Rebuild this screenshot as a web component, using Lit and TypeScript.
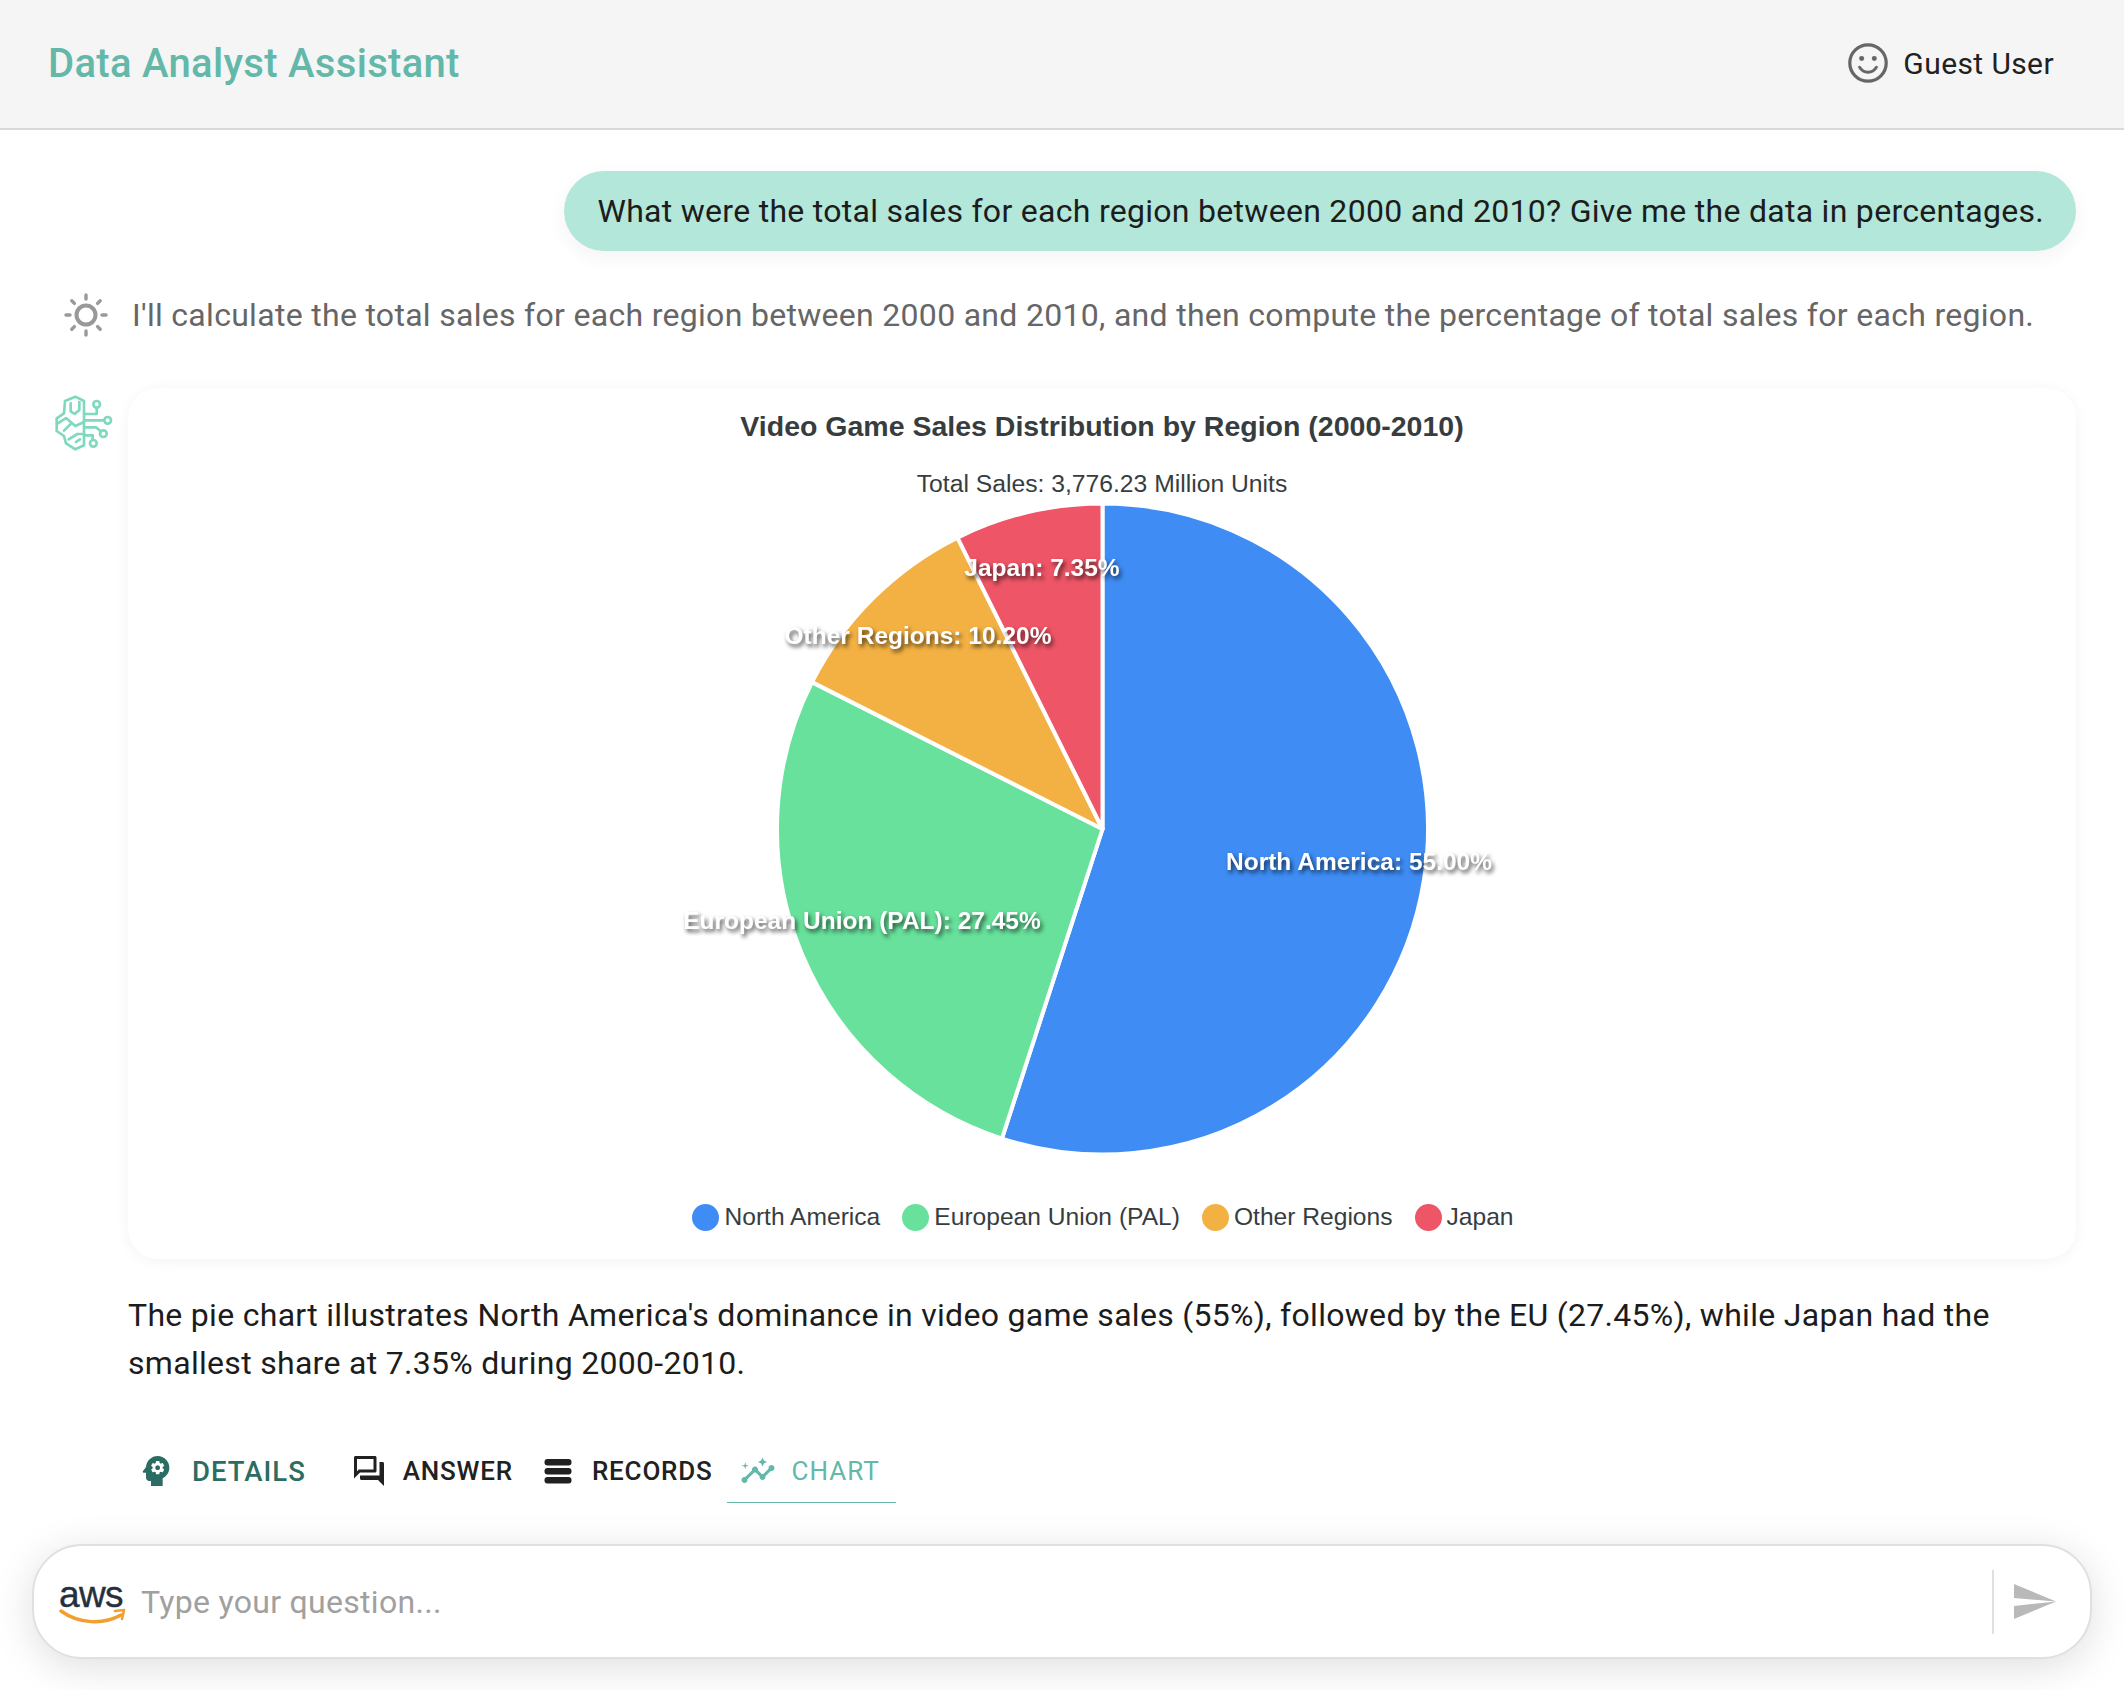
import { LitElement, html, css, svg } from "lit";
import { customElement } from "lit/decorators.js";

const CX = 1102.5, CY = 829, R = 325.5;
const slices = [
  { name: "North America", pct: 55.0, color: "#3e8cf4", lx: 1359, ly: 870 },
  { name: "European Union (PAL)", pct: 27.45, color: "#67e19b", lx: 862, ly: 929 },
  { name: "Other Regions", pct: 10.2, color: "#f3b143", lx: 918, ly: 644 },
  { name: "Japan", pct: 7.35, color: "#ee5567", lx: 1042, ly: 576 },
];

function arc(start: number, end: number) {
  const a0 = (start / 100) * 2 * Math.PI, a1 = (end / 100) * 2 * Math.PI;
  const x0 = CX + R * Math.sin(a0), y0 = CY - R * Math.cos(a0);
  const x1 = CX + R * Math.sin(a1), y1 = CY - R * Math.cos(a1);
  return `M${CX} ${CY}L${x0} ${y0}A${R} ${R} 0 ${end - start > 50 ? 1 : 0} 1 ${x1} ${y1}Z`;
}

@customElement("app-root")
export class AppRoot extends LitElement {
  static styles = css`
    :host { display: block; width: 2124px; height: 1690px; overflow: hidden; background: #fff; font-family: Roboto, sans-serif; color: #1f1f1f; }
    .page { display: flex; flex-direction: column; height: 1690px; }
    .top { display: flex; align-items: center; justify-content: space-between; flex: none; box-sizing: border-box; padding: 0 70px 2px 48px; background: #f5f5f5; border-bottom: 2px solid #d9d9d9; height: 130px; }
    .title { font-size: 40px; font-weight: 500; color: #63b8aa; letter-spacing: 0.3px; }
    .user { display: flex; align-items: center; gap: 12px; font-size: 30px; letter-spacing: 0.4px; color: #212121; }
    .user svg { width: 46px; height: 46px; }
    .main { flex: 1; display: flex; flex-direction: column; padding: 41px 48px 0 0; min-height: 0; }
    .bubble { align-self: flex-end; background: #b2e7da; border-radius: 40px; height: 80px; display: flex; align-items: center; padding: 0 32px 0 33px; font-size: 32px; letter-spacing: 0.29px; box-shadow: 0 6px 20px rgba(0,0,0,.05); color: #1c1c1c; white-space: nowrap; }
    .think { display: flex; align-items: center; margin-top: 42px; height: 44px; font-size: 32px; letter-spacing: 0.3px; color: #666; font-weight: 400; white-space: nowrap; }
    .think svg { width: 46px; height: 46px; margin-left: 63px; margin-right: 23px; flex: none; }
    .answer { display: flex; margin-top: 51px; }
    .brain { width: 84px; height: 75px; margin: -2px 0 0 40px; flex: none; }
    .body { margin-left: 4px; flex: 1; min-width: 0; }
    .card { position: relative; height: 871px; border-radius: 30px; background: #fff; box-shadow: 0 2px 14px rgba(0,0,0,.05); }
    .card svg { position: absolute; left: -128px; top: -388px; width: 2124px; height: 1690px; pointer-events: none; }
    .ctitle { font-family: "Liberation Sans", Arial, sans-serif; font-weight: 700; font-size: 28.5px; fill: #373d3f; text-anchor: middle; }
    .csub { font-family: "Liberation Sans", Arial, sans-serif; font-size: 24.7px; fill: #373d3f; text-anchor: middle; }
    .lbl { font-family: "Liberation Sans", Arial, sans-serif; font-weight: 700; font-size: 24.5px; fill: #fff; text-anchor: middle; filter: drop-shadow(2px 3px 2px rgba(0,0,0,.65)); }
    .legend { position: absolute; left: 0; right: 0; top: 815px; display: flex; justify-content: center; gap: 22px; font-family: "Liberation Sans", Arial, sans-serif; font-size: 24.6px; color: #373d3f; box-sizing: border-box; padding-left: 2px; }
    .leg { display: flex; align-items: center; gap: 5px; }
    .dot { width: 27px; height: 27px; border-radius: 50%; }
    .text { font-size: 32px; line-height: 48px; letter-spacing: 0.3px; margin: 32px 0 0; color: #1c1c1c; }
    .tabs { display: flex; margin-top: 53px; align-items: stretch; height: 63px; font-size: 26px; font-weight: 500; letter-spacing: 0.8px; }
    .tab { display: flex; align-items: center; gap: 16px; padding: 0 14px 0 13px; color: #212121; border-bottom: 1px solid transparent; }
    .tab svg { width: 36px; height: 36px; fill: currentColor; flex: none; }
    .tab.details { color: #2b6d62; padding: 0 32px 0 8px; font-size: 27.5px; letter-spacing: 1px; }
    .tab.details svg { width: 40px; height: 40px; }
    .tab.chart { color: #63b8aa; border-bottom-color: #63b8aa; font-weight: 400; padding: 0 16px 0 13px; letter-spacing: 1px; }
    .bar { flex: none; height: 146px; padding: 0 32px 31px 32px; box-sizing: border-box; display: flex; align-items: flex-end; }
    .input { flex: 1; height: 115px; box-sizing: border-box; border: 2px solid #e0e0e0; border-radius: 50px; background: #fff; box-shadow: 0 8px 40px rgba(0,0,0,.13); display: flex; align-items: center; padding: 0 34px 0 25px; }
    .aws { position: relative; width: 68px; height: 48px; flex: none; }
    .aws span { display: block; font-family: "Liberation Sans", Arial, sans-serif; font-size: 37px; line-height: 34px; letter-spacing: -0.6px; color: #252f3e; font-weight: 400; -webkit-text-stroke: 0.4px #252f3e; }
    .aws svg { position: absolute; left: 0; bottom: 0; width: 68px; height: 18px; }
    .ph { flex: 1; margin-left: 14px; font-size: 32px; letter-spacing: 0.3px; color: #a0a0a0; }
    .sep { width: 2px; height: 64px; background: #e0e0e0; }
    .send { margin-left: 20px; width: 42px; height: 35px; flex: none; }
  `;

  render() {
    let acc = 0;
    const paths = slices.map((s) => {
      const d = arc(acc, acc + s.pct);
      acc += s.pct;
      return svg`<path d=${d} fill=${s.color} stroke="#fff" stroke-width="4" stroke-linejoin="round"></path>`;
    });
    return html`<div class="page">
      <div class="top">
        <div class="title">Data Analyst Assistant</div>
        <div class="user">
          <svg viewBox="0 0 24 24"><circle cx="12" cy="12" r="9.5" fill="none" stroke="#666" stroke-width="1.7"></circle><circle cx="8.7" cy="9.7" r="1.3" fill="#666"></circle><circle cx="15.3" cy="9.7" r="1.3" fill="#666"></circle><path d="M7.6 14.2c1 1.7 2.6 2.6 4.4 2.6s3.4-.9 4.4-2.6" fill="none" stroke="#666" stroke-width="1.5" stroke-linecap="round"></path></svg>
          Guest User
        </div>
      </div>
      <div class="main">
        <div class="bubble">What were the total sales for each region between 2000 and 2010? Give me the data in percentages.</div>
        <div class="think">
          <svg viewBox="0 0 46 46" fill="none" stroke="#999"><circle cx="23" cy="23" r="9.5" stroke-width="4"></circle><g stroke-width="3.4" stroke-linecap="round"><path d="M23 3v4M23 39v4M3 23h4M39 23h4M8.8 8.8l2.6 2.6M34.6 34.6l2.6 2.6M8.8 37.2l2.6-2.6M34.6 11.4l2.6-2.6"></path></g></svg>
          I'll calculate the total sales for each region between 2000 and 2010, and then compute the percentage of total sales for each region.
        </div>
        <div class="answer">
          <svg class="brain" viewBox="0 0 252 225" fill="none" stroke="#7fd9bf" stroke-width="8" stroke-linecap="round" stroke-linejoin="round">
            <path d="M106 32L75 45L72 82L50 97V135L72 150L78 172L106 190L132 178V45Z"></path>
            <path d="M92 52V76L104 84L118 72V48"></path>
            <path d="M54 112L78 96L106 120M72 134L94 112M106 120L132 108"></path>
            <path d="M86 160L112 144H132M108 168L120 160"></path>
            <path d="M133 84H170V66M133 103H192M133 124H168L182 136M133 148H158V161"></path>
            <circle cx="170" cy="55" r="10"></circle><circle cx="203" cy="103" r="10"></circle><circle cx="190" cy="143" r="10"></circle><circle cx="160" cy="172" r="10"></circle>
          </svg>
          <div class="body">
            <div class="card">
              <svg viewBox="0 0 2124 1690">
                <text class="ctitle" x="1102" y="436">Video Game Sales Distribution by Region (2000-2010)</text>
                <text class="csub" x="1102" y="492">Total Sales: 3,776.23 Million Units</text>
                ${paths}
                ${slices.map((s) => svg`<text class="lbl" x=${s.lx} y=${s.ly}>${s.name}: ${s.pct.toFixed(2)}%</text>`)}
              </svg>
              <div class="legend">
                ${slices.map((s) => html`<div class="leg"><span class="dot" style="background:${s.color}"></span>${s.name}</div>`)}
              </div>
            </div>
            <p class="text">The pie chart illustrates North America's dominance in video game sales (55%), followed by the EU (27.45%), while Japan had the smallest share at 7.35% during 2000-2010.</p>
            <div class="tabs">
              <div class="tab details"><svg viewBox="0 0 24 24"><path d="M13 8.57c-.79 0-1.43.64-1.43 1.43s.64 1.43 1.43 1.43 1.43-.64 1.43-1.43-.64-1.43-1.43-1.43z"></path><path d="M13 3C9.25 3 6.2 5.94 6.02 9.64L4.1 12.2c-.25.33-.01.8.4.8H6v3c0 1.1.9 2 2 2h1v3h7v-4.68c2.36-1.12 4-3.53 4-6.32 0-3.87-3.13-7-7-7zm3 7c0 .13-.01.26-.02.39l.83.66c.08.06.1.16.05.25l-.8 1.39c-.05.09-.16.12-.24.09l-.99-.4c-.21.16-.43.29-.67.39L14 13.83c-.01.1-.1.17-.2.17h-1.6c-.1 0-.18-.07-.2-.17l-.15-1.06c-.25-.1-.47-.23-.68-.39l-.99.4c-.09.03-.2 0-.25-.09l-.8-1.39c-.05-.08-.03-.19.05-.25l.84-.66c-.01-.13-.02-.26-.02-.39s.02-.27.04-.39l-.85-.66c-.08-.06-.1-.16-.05-.26l.8-1.38c.05-.09.15-.12.24-.09l1 .4c.2-.15.43-.29.67-.39L12 6.17c.02-.1.1-.17.2-.17h1.6c.1 0 .18.07.2.17l.15 1.06c.24.1.46.23.67.39l1-.4c.09-.03.2 0 .24.09l.8 1.38c.05.09.03.2-.05.26l-.85.66c.03.12.04.25.04.39z"></path></svg>DETAILS</div>
              <div class="tab"><svg viewBox="0 0 24 24"><path d="M15 4v7H5.17l-.59.59-.58.58V4h11m1-2H3c-.55 0-1 .45-1 1v14l4-4h10c.55 0 1-.45 1-1V3c0-.55-.45-1-1-1zm5 4h-2v9H6v2c0 .55.45 1 1 1h11l4 4V7c0-.55-.45-1-1-1z"></path></svg>ANSWER</div>
              <div class="tab"><svg viewBox="0 0 24 24"><rect x="3" y="4" width="18" height="4.4" rx="2"></rect><rect x="3" y="10" width="18" height="4.4" rx="2"></rect><rect x="3" y="16" width="18" height="4.4" rx="2"></rect></svg>RECORDS</div>
              <div class="tab chart"><svg viewBox="0 0 24 24"><path d="M21 8c-1.45 0-2.26 1.44-1.93 2.51l-3.55 3.56c-.3-.09-.74-.09-1.04 0l-2.55-2.55C12.27 10.45 11.46 9 10 9c-1.45 0-2.27 1.44-1.93 2.52l-4.56 4.55C2.44 15.74 1 16.55 1 18c0 1.1.9 2 2 2 1.45 0 2.26-1.44 1.93-2.51l4.55-4.56c.3.09.74.09 1.04 0l2.55 2.55C12.73 16.55 13.54 18 15 18c1.45 0 2.27-1.44 1.93-2.52l3.56-3.55C21.56 12.26 23 11.45 23 10c0-1.1-.9-2-2-2z"></path><path d="M15 9l.94-2.07L18 6l-2.06-.93L15 3l-.92 2.07L12 6l2.08.93z"></path><path d="M3.5 11 4 9l2-.5L4 8l-.5-2L3 8l-2 .5L3 9z"></path></svg>CHART</div>
            </div>
          </div>
        </div>
      </div>
      <div class="bar">
        <div class="input">
          <div class="aws"><span>aws</span><svg viewBox="0 0 68 18" fill="none"><path d="M2 3c18 13 42 14 60 4" stroke="#f29f2e" stroke-width="3.4" stroke-linecap="round"></path><path d="M56 3l9-1-2 9" stroke="#f29f2e" stroke-width="2.6" stroke-linecap="round" stroke-linejoin="round"></path></svg></div>
          <div class="ph">Type your question...</div>
          <div class="sep"></div>
          <svg class="send" viewBox="0 0 42 35"><path d="M0 0L42 17.5L0 14ZM0 22L42 17.5L0 35Z" fill="#b9b9b9"></path></svg>
        </div>
      </div>
    </div>`;
  }
}
